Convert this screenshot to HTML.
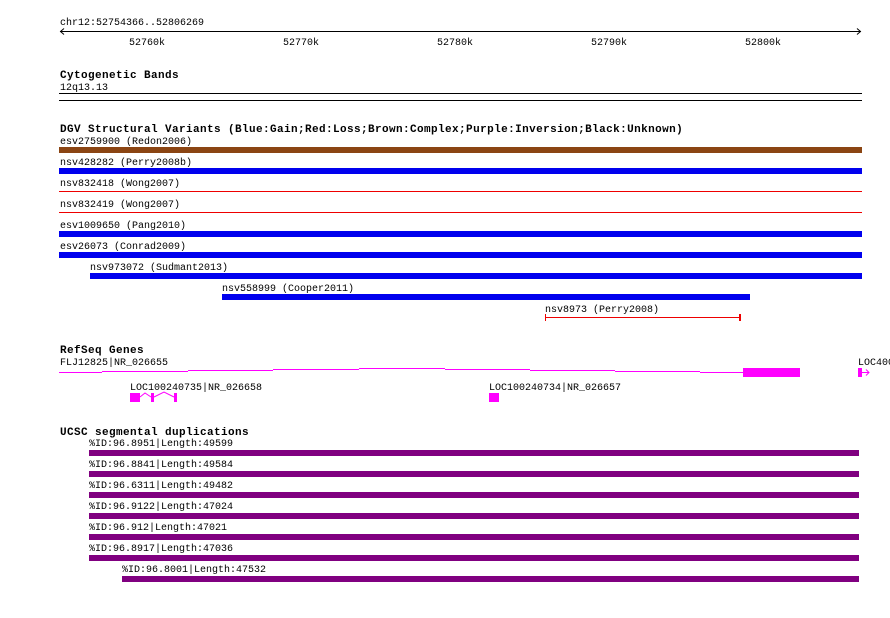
<!DOCTYPE html>
<html><head><meta charset="utf-8"><style>
html,body{margin:0;padding:0;background:#fff;}
svg{display:block;}
text{font-family:"Liberation Mono",monospace;font-size:10px;fill:#000;}
.b{font-weight:bold;font-size:11px;letter-spacing:0.4px;}
</style></head><body>
<svg width="890" height="618" xmlns="http://www.w3.org/2000/svg" shape-rendering="crispEdges">
<g id="grid" stroke="#a8e4ec" stroke-width="1"></g>
<script>
var g=document.getElementById('grid');var s='';
for(var n=-5;n<=46;n++){var x=Math.round(147.3+15.4*n)+0.5;var maj=(n%10==0);
s+='<line x1="'+x+'" y1="0" x2="'+x+'" y2="618" stroke="'+(maj?'#8cc4e4':'#a8e4ec')+'"/>';}
s+='<line x1="59.5" y1="0" x2="59.5" y2="618"/>';
g.innerHTML=s;
</script>
<!-- ruler -->
<text x="60" y="25">chr12:52754366..52806269</text>
<line x1="60" y1="31.5" x2="861" y2="31.5" stroke="#000"/>
<path d="M64 28.5 L60.5 31.5 L64 34.5 M857 28.5 L860.5 31.5 L857 34.5" stroke="#000" fill="none" shape-rendering="auto"/>
<g id="ticks" stroke="#000"></g>
<script>
var t='';for(var n=-5;n<=46;n++){var x=Math.round(147.3+15.4*n)+0.5;t+='<line x1="'+x+'" y1="29" x2="'+x+'" y2="35"/>';}
document.getElementById('ticks').innerHTML=t;
</script>
<text x="129" y="45">52760k</text>
<text x="283" y="45">52770k</text>
<text x="437" y="45">52780k</text>
<text x="591" y="45">52790k</text>
<text x="745" y="45">52800k</text>

<text class="b" x="60" y="78">Cytogenetic Bands</text>
<text x="60" y="90">12q13.13</text>
<rect x="59" y="93" width="803" height="1" fill="#000"/>
<rect x="59" y="100" width="803" height="1" fill="#000"/>

<text class="b" x="60" y="132">DGV Structural Variants (Blue:Gain;Red:Loss;Brown:Complex;Purple:Inversion;Black:Unknown)</text>
<text x="60" y="144">esv2759900 (Redon2006)</text>
<rect x="59" y="147" width="803" height="6" fill="#8b4513"/>
<text x="60" y="165">nsv428282 (Perry2008b)</text>
<rect x="59" y="168" width="803" height="6" fill="#0000ee"/>
<text x="60" y="186">nsv832418 (Wong2007)</text>
<rect x="59" y="191" width="803" height="1" fill="#ee0000"/>
<text x="60" y="207">nsv832419 (Wong2007)</text>
<rect x="59" y="212" width="803" height="1" fill="#ee0000"/>
<text x="60" y="228">esv1009650 (Pang2010)</text>
<rect x="59" y="231" width="803" height="6" fill="#0000ee"/>
<text x="60" y="249">esv26073 (Conrad2009)</text>
<rect x="59" y="252" width="803" height="6" fill="#0000ee"/>
<text x="90" y="270">nsv973072 (Sudmant2013)</text>
<rect x="90" y="273" width="772" height="6" fill="#0000ee"/>
<text x="222" y="291">nsv558999 (Cooper2011)</text>
<rect x="222" y="294" width="528" height="6" fill="#0000ee"/>
<text x="545" y="312">nsv8973 (Perry2008)</text>
<rect x="545" y="317" width="195" height="1" fill="#ee0000"/>
<rect x="545" y="314" width="1" height="7" fill="#ee0000"/>
<rect x="739" y="314" width="2" height="7" fill="#ee0000"/>

<text class="b" x="60" y="353">RefSeq Genes</text>
<text x="60" y="365">FLJ12825|NR_026655</text>
<path d="M59 372.5H102M102 371.5H188M188 370.5H273M273 369.5H359M359 368.5H445M445 369.5H530M530 370.5H615M615 371.5H700M700 372.5H743" stroke="#ff00ff" fill="none"/>
<rect x="743" y="368" width="57" height="9" fill="#ff00ff"/>
<text x="858" y="365">LOC400</text>
<rect x="858" y="368" width="4" height="9" fill="#ff00ff"/>
<path d="M862 372.5H869M866 369.5L869 372.5L866 375.5" stroke="#ff00ff" fill="none" shape-rendering="auto"/>
<text x="130" y="390">LOC100240735|NR_026658</text>
<rect x="130" y="393" width="10" height="9" fill="#ff00ff"/>
<rect x="151" y="393" width="3" height="9" fill="#ff00ff"/>
<rect x="174" y="393" width="3" height="9" fill="#ff00ff"/>
<path d="M140 397L145 393L151 397M154 397L164 392L174 397" stroke="#ff00ff" fill="none" shape-rendering="auto"/>
<text x="489" y="390">LOC100240734|NR_026657</text>
<rect x="489" y="393" width="10" height="9" fill="#ff00ff"/>

<text class="b" x="60" y="435">UCSC segmental duplications</text>
<text x="89" y="446">%ID:96.8951|Length:49599</text>
<rect x="89" y="450" width="770" height="6" fill="#800080"/>
<text x="89" y="467">%ID:96.8841|Length:49584</text>
<rect x="89" y="471" width="770" height="6" fill="#800080"/>
<text x="89" y="488">%ID:96.6311|Length:49482</text>
<rect x="89" y="492" width="770" height="6" fill="#800080"/>
<text x="89" y="509">%ID:96.9122|Length:47024</text>
<rect x="89" y="513" width="770" height="6" fill="#800080"/>
<text x="89" y="530">%ID:96.912|Length:47021</text>
<rect x="89" y="534" width="770" height="6" fill="#800080"/>
<text x="89" y="551">%ID:96.8917|Length:47036</text>
<rect x="89" y="555" width="770" height="6" fill="#800080"/>
<text x="122" y="572">%ID:96.8001|Length:47532</text>
<rect x="122" y="576" width="737" height="6" fill="#800080"/>
</svg>
</body></html>
